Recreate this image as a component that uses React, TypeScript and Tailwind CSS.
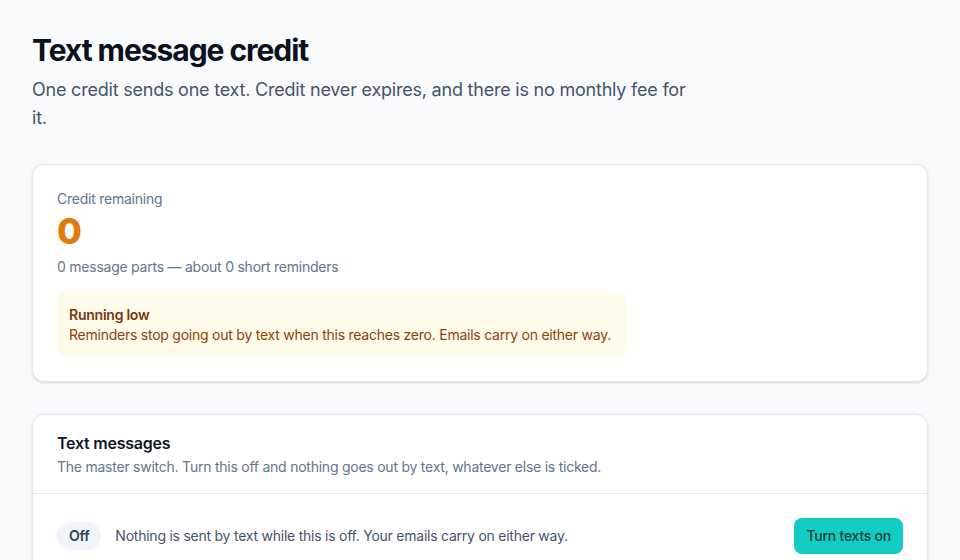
import { useState } from "react";

const App = () => {
  const [textsOn, setTextsOn] = useState(false);
  const credit = 0;

  return (
    <div className="min-h-screen bg-[#f8fafc] px-8 pt-8 pb-10 font-['Inter',sans-serif] tracking-[-0.015em] text-slate-900">
      {/* Header */}
      <h1 className="text-[30px] leading-9 font-bold tracking-[-0.035em] text-[#0b1120]">Text message credit</h1>
      <p className="mt-2 max-w-[665px] text-lg leading-7 tracking-[-0.012em] text-slate-600">
        One credit sends one text. Credit never expires, and there is no monthly fee for it.
      </p>

      {/* Balance card */}
      <div className="mt-8 rounded-xl border border-slate-200 bg-white p-6 shadow-sm">
        <div className="text-sm text-slate-500">Credit remaining</div>
        <div className="mt-0.5 text-4xl leading-10 font-extrabold text-[#e07a0a]">{credit}</div>
        <div className="mt-1.5 text-sm text-slate-500">0 message parts — about 0 short reminders</div>

        <div className="mt-4 max-w-[570px] rounded-lg bg-[#fffbeb] px-3 py-3">
          <div className="text-sm font-semibold text-[#78350f]">Running low</div>
          <div className="text-sm text-[#92400e]">
            Reminders stop going out by text when this reaches zero. Emails carry on either way.
          </div>
        </div>
      </div>

      {/* Master switch card */}
      <div className="mt-8 rounded-xl border border-slate-200 bg-white shadow-sm">
        <div className="border-b border-slate-200 px-6 pt-4 pb-4">
          <h2 className="text-base font-semibold text-slate-900">Text messages</h2>
          <p className="mt-0.5 text-sm text-slate-500">
            The master switch. Turn this off and nothing goes out by text, whatever else is ticked.
          </p>
        </div>
        <div className="flex items-center gap-3.5 px-6 py-6">
          <span className="rounded-full bg-slate-100 px-3 py-1 text-sm font-semibold text-slate-700">
            {textsOn ? "On" : "Off"}
          </span>
          <span className="flex-1 text-sm text-slate-600">
            Nothing is sent by text while this is off. Your emails carry on either way.
          </span>
          <button
            onClick={() => setTextsOn(!textsOn)}
            className="rounded-lg bg-[#13cdc4] px-3 py-2 text-sm font-medium text-[#0f3b3a]"
          >
            Turn texts on
          </button>
        </div>
      </div>
    </div>
  );
};

export default App;
